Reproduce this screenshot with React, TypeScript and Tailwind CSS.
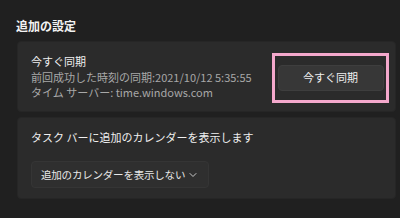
import React from 'react';

const font = { fontFamily: '"Noto Sans CJK JP", "Noto Sans", sans-serif' };

const Chevron = () => (
  <svg width="10" height="10" viewBox="0 0 10 10" className="shrink-0">
    <path d="M2 3.5 L5 6.5 L8 3.5" fill="none" stroke="#c8c8c8" strokeWidth="1" strokeLinecap="round" strokeLinejoin="round" />
  </svg>
);

export default function App() {
  return (
    <div
      className="w-[400px] h-[218px] bg-[#202020] text-white overflow-hidden pl-[16px] pr-[4px] pt-[15px] whitespace-nowrap"
      style={font}
    >
      <div className="text-[12px] font-bold leading-[22px] text-[#f2f2f2] mb-[4px]">追加の設定</div>

      {/* sync card */}
      <div className="ml-[1px] h-[71px] bg-[#2b2b2b] rounded-[4px] border border-[#262626] flex items-center pl-[13px] pr-[6px]">
        <div className="flex-1 flex flex-col text-[11px] leading-[15.5px] pt-[2px]">
          <span className="text-[#f0f0f0]">今すぐ同期</span>
          <span className="text-[#a8a8a8]">前回成功した時刻の同期:2021/10/12 5:35:55</span>
          <span className="text-[#a8a8a8]">タイム サーバー: time.windows.com</span>
        </div>
        <div className="border-[3px] border-[#f4a8cc] w-[117px] h-[50px] flex items-center justify-center mt-[2px]">
          <button className="w-[106px] h-[26px] rounded-[4px] bg-[#373737] border border-[#3e3e3e] text-[11px] text-[#f0f0f0]">
            今すぐ同期
          </button>
        </div>
      </div>

      {/* calendar card */}
      <div className="ml-[1px] mt-[5px] h-[82px] bg-[#2b2b2b] rounded-[4px] border border-[#262626] pl-[13px] pt-[10px]">
        <div className="text-[11px] leading-[18px] text-[#f0f0f0]">タスク バーに追加のカレンダーを表示します</div>
        <div className="mt-[15px] w-[178px] h-[27px] rounded-[4px] bg-[#2f2f2f] border border-[#353535] flex items-center justify-between pl-[9px] pr-[10px]">
          <span className="text-[10.5px] text-[#e8e8e8] tracking-[-0.2px]">追加のカレンダーを表示しない</span>
          <Chevron />
        </div>
      </div>
    </div>
  );
}
